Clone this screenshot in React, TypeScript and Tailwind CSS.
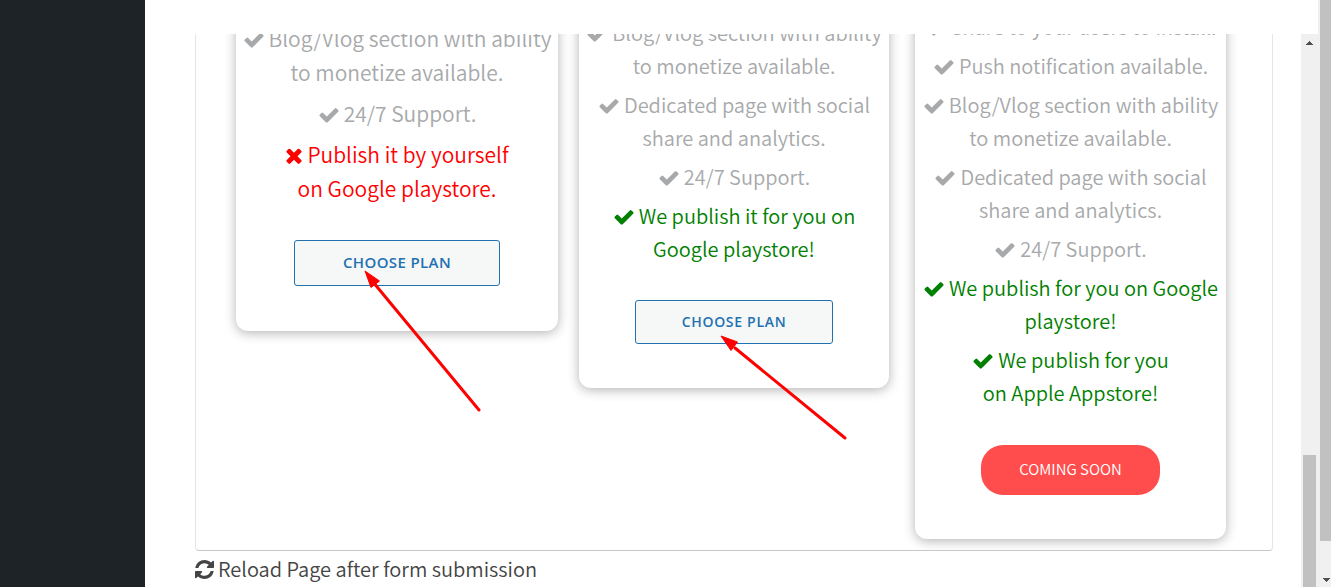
import type { ReactNode } from "react";

const icons = {
  check: {
    box: "0 0 1792 1792",
    d: "M1671 566q0 40-28 68l-724 724-136 136q-28 28-68 28t-68-28l-136-136-362-362q-28-28-28-68t28-68l136-136q28-28 68-28t68 28l294 295 656-657q28-28 68-28t68 28l136 136q28 28 28 68z",
  },
  times: {
    box: "192 0 1408 1792",
    d: "M1490 1322q0 40-28 68l-136 136q-28 28-68 28t-68-28l-294-294-294 294q-28 28-68 28t-68-28l-136-136q-28-28-28-68t28-68l294-294-294-294q-28-28-28-68t28-68l136-136q28-28 68-28t68 28l294 294 294-294q28-28 68-28t68 28l136 136q28 28 28 68t-28 68l-294 294 294 294q28 28 28 68z",
  },
  refresh: {
    box: "128 128 1536 1536",
    d: "M1639 1056q0 5-1 7-64 268-268 434.5t-478 166.5q-146 0-282.5-55t-243.5-157l-129 129q-19 19-45 19t-45-19-19-45v-448q0-26 19-45t45-19h448q26 0 45 19t19 45-19 45l-137 137q71 66 161 102t187 36q134 0 250-65t186-179q11-17 53-117 8-23 30-23h192q13 0 22.5 9.5t9.5 22.5zm25-800v448q0 26-19 45t-45 19h-448q-26 0-45-19t-19-45 19-45l138-138q-148-137-349-137-134 0-250 65t-186 179q-11 17-53 117-8 23-30 23h-199q-13 0-22.5-9.5t-9.5-22.5v-7q65-268 270-434.5t480-166.5q146 0 284 55.5t245 156.5l130-129q19-19 45-19t45 19 19 45z",
  },
};

function Icon({ name, className }: { name: keyof typeof icons; className: string }) {
  return (
    <svg viewBox={icons[name].box} aria-hidden="true" className={className} fill="currentColor">
      <path d={icons[name].d} />
    </svg>
  );
}

type Tone = "muted" | "red" | "green";
type Feature = { lines: string[]; tone?: Tone };

const tones: Record<Tone, string> = {
  muted: "text-[#a7a9ab]",
  red: "text-[#ff0000]",
  green: "text-[#008000]",
};

function Features({ items, large = false }: { items: Feature[]; large?: boolean }) {
  return (
    <ul
      className={
        large
          ? "flex flex-col gap-[7px] text-[21px] leading-[34px]"
          : "flex flex-col gap-1.5 text-[20px] leading-[33px]"
      }
    >
      {items.map((item) => (
        <li key={item.lines[0]} className={tones[item.tone ?? "muted"]}>
          {item.lines.map((line, i) => (
            <span key={line} className="block whitespace-nowrap">
              {i === 0 && (
                <Icon
                  name={item.tone === "red" ? "times" : "check"}
                  className={
                    item.tone === "red"
                      ? "mr-1 inline h-[23px] w-[18px] align-[-4px]"
                      : "mr-1 inline size-[22px] align-[-4px]"
                  }
                />
              )}
              {line}
            </span>
          ))}
        </li>
      ))}
    </ul>
  );
}

function Card({ className, children }: { className: string; children: ReactNode }) {
  return (
    <section
      className={`flex shrink-0 flex-col items-center rounded-b-xl bg-white text-center shadow-[0_2px_12px_rgba(0,0,0,0.3)] ${className}`}
    >
      {children}
    </section>
  );
}

function PlanButton({ className }: { className: string }) {
  return (
    <button
      type="button"
      className={`rounded-[3px] border border-[#2271b1] bg-[#f6f7f7] pb-0.5 font-['Open_Sans',sans-serif] font-semibold text-[#2271b1] ${className}`}
    >
      CHOOSE PLAN
    </button>
  );
}

const support: Feature = { lines: ["24/7 Support."] };
const blog: Feature = { lines: ["Blog/Vlog section with ability", "to monetize available."] };
const page: Feature = { lines: ["Dedicated page with social", "share and analytics."] };

export default function App() {
  return (
    <div className="flex h-screen overflow-hidden bg-white font-['Noto_Sans_CJK_SC',sans-serif] font-[350]">
      <aside className="w-[145px] shrink-0 bg-[#1d2327]" />
      <main className="relative flex min-w-0 flex-1 flex-col pt-[34px] pr-7 pl-[50px]">
        <div className="flex h-[517px] shrink-0 items-start overflow-hidden rounded-b border-x border-b border-x-[#e5e5e5] border-b-[#c8c8c8] pl-10">
          <Card className="mt-[-13px] w-[322px] pb-[45px]">
            <Features
              large
              items={[blog, support, { lines: ["Publish it by yourself", "on Google playstore."], tone: "red" }]}
            />
            <PlanButton className="mt-[35px] h-[46px] w-[206px] text-[15px] tracking-wide" />
          </Card>
          <Card className="mt-[-18px] ml-[21px] w-[310px] pb-11">
            <Features
              items={[
                blog,
                page,
                support,
                { lines: ["We publish it for you on", "Google playstore!"], tone: "green" },
              ]}
            />
            <PlanButton className="mt-[35px] h-11 w-[198px] text-[14px] tracking-wider" />
          </Card>
          <Card className="mt-[-24px] ml-[26px] w-[311px] pb-11">
            <Features
              items={[
                { lines: ["Share to your users to install."] },
                { lines: ["Push notification available."] },
                blog,
                page,
                support,
                { lines: ["We publish for you on Google", "playstore!"], tone: "green" },
                { lines: ["We publish for you", "on Apple Appstore!"], tone: "green" },
              ]}
            />
            <button
              type="button"
              className="mt-9 h-[50px] w-[179px] rounded-[22px] bg-[#ff4c4c] pb-0.5 text-[15px] text-white"
            >
              COMING SOON
            </button>
          </Card>
        </div>
        <p className="flex items-center gap-1 whitespace-nowrap text-[20px] leading-9 text-[#444]">
          <Icon name="refresh" className="size-[19px]" />
          Reload Page after form submission
        </p>
        <svg
          aria-hidden="true"
          className="pointer-events-none absolute top-0 left-0 h-[587px] w-[760px]"
          fill="#ff0000"
          stroke="#ff0000"
        >
          <path d="M334 410 228 282M700 438 590 348" strokeWidth="3" strokeLinecap="round" fill="none" />
          <path d="M220 271l14.500 10-8.500 6.500zM576 336l16.500 6-6.500 8.500z" strokeWidth="1" />
        </svg>
      </main>
      <div className="mt-[34px] flex w-[17px] shrink-0 flex-col bg-[#f0f0f0] pt-[7px] pr-0.5 pl-0.5">
        <svg viewBox="0 0 7 4" aria-hidden="true" className="ml-[3px] h-1 w-[7px]" fill="#505050">
          <path d="M0 4V3h1V2h1V1h1V0h1v1h1v1h1v1h1v1z" />
        </svg>
        <div className="mt-[410px] flex-1 bg-[#c1c1c1]" />
      </div>
      <div className="flex w-[13px] shrink-0 flex-col bg-[#f0f0f0] pb-[5px] pl-0.5">
        <div className="flex-1 bg-[#c1c1c1]" />
        <svg viewBox="0 0 7 4" aria-hidden="true" className="mt-[37px] ml-[3px] h-1 w-[7px]" fill="#505050">
          <path d="M0 0v1h1v1h1v1h1v1h1V3h1V2h1V1h1V0z" />
        </svg>
      </div>
    </div>
  );
}
